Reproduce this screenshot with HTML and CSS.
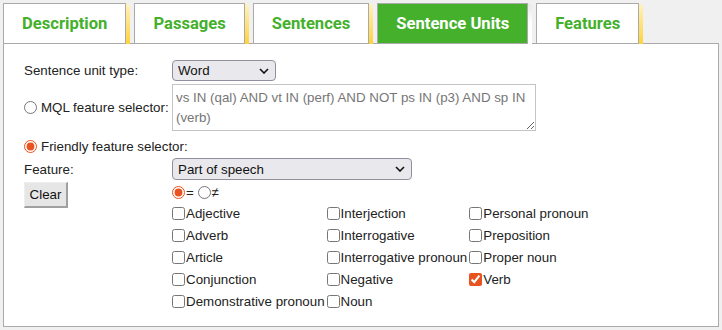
FILE: index.html
```html
<!DOCTYPE html>
<html lang="en">
<head>
    <meta charset="UTF-8">
    <meta name="viewport" content="width=device-width, initial-scale=1.0">
    <title>Sentence Units</title>
    <link rel="stylesheet" href="styles.css">
</head>
<body>
    <div class="tabs">
        <div class="tab"><span class="tab-label">Description</span></div>
        <div class="tab"><span class="tab-label">Passages</span></div>
        <div class="tab"><span class="tab-label">Sentences</span></div>
        <div class="tab active"><span class="tab-label">Sentence Units</span></div>
        <div class="tab"><span class="tab-label">Features</span></div>
    </div>

    <div class="panel">
        <div class="row">
            <div class="cell-label">Sentence unit type:</div>
            <select class="sel-unit"><option>Word</option></select>
        </div>
        <div class="row row-mql">
            <label class="cell-label"><input type="radio" name="selector">MQL feature selector:</label>
            <textarea class="mql" disabled>vs IN (qal) AND vt IN (perf) AND NOT ps IN (p3) AND sp IN (verb)</textarea>
        </div>
        <div class="row row-friendly">
            <label><input type="radio" name="selector" checked>Friendly feature selector:</label>
        </div>
        <div class="row">
            <div class="cell-label">Feature:</div>
            <select class="sel-feature"><option>Part of speech</option></select>
        </div>
        <div class="row row-values">
            <div class="cell-label"><button class="clear">Clear</button></div>
            <div class="values">
                <div class="cmp"><input type="radio" name="cmp" checked>= <input type="radio" name="cmp">≠</div>
                <div class="opts">
                    <label class="opt"><input type="checkbox">Adjective</label>
                    <label class="opt"><input type="checkbox">Adverb</label>
                    <label class="opt"><input type="checkbox">Article</label>
                    <label class="opt"><input type="checkbox">Conjunction</label>
                    <label class="opt"><input type="checkbox">Demonstrative pronoun</label>
                    <label class="opt"><input type="checkbox">Interjection</label>
                    <label class="opt"><input type="checkbox">Interrogative</label>
                    <label class="opt"><input type="checkbox">Interrogative pronoun</label>
                    <label class="opt"><input type="checkbox">Negative</label>
                    <label class="opt"><input type="checkbox">Noun</label>
                    <label class="opt"><input type="checkbox">Personal pronoun</label>
                    <label class="opt"><input type="checkbox">Preposition</label>
                    <label class="opt"><input type="checkbox">Proper noun</label>
                    <label class="opt"><input type="checkbox" checked>Verb</label>
                </div>
            </div>
        </div>
    </div>
</body>
</html>
```

FILE: styles.css
```css
body {
    margin: 0;
    padding: 3px;
    background-color: #f0f0f0;
    font-family: "Liberation Sans", Arial, sans-serif;
    font-size: 13.33px;
    color: #222;
}
input {
    accent-color: #e9531f;
}

/* tabs */
.tabs {
    display: flex;
    gap: 4px;
    position: relative;
    z-index: 1;
    margin-bottom: -1px;
}
.tab {
    padding-right: 4px;
    border-top-right-radius: 5px;
    background: linear-gradient(#fff3c0, #ffd23c);
}
.tab.active {
    background: linear-gradient(#e6e6e6, #ffffff 50%);
}
.tab-label {
    display: block;
    height: 39px;
    line-height: 39px;
    padding: 0 18px;
    background: white;
    border: 1px solid #aaa;
    color: #44b02b;
    font-family: Roboto, "Open Sans", sans-serif;
    font-weight: bold;
    font-size: 16.6px;
}
.tab.active .tab-label {
    background: #44b02b;
    color: white;
}

/* panel */
.panel {
    background: white;
    border: 1px solid #aaa;
    padding: 16px 20px 14px 20px;
}
.row {
    display: flex;
    align-items: center;
}
.cell-label {
    width: 148px;
    flex: none;
    display: flex;
    align-items: center;
}
input[type="radio"] {
    margin: 0 4px 0 0;
}
select {
    -webkit-appearance: none;
    appearance: none;
    font: inherit;
    color: #111;
    height: 21px;
    padding: 0 0 0 5px;
    border: 1px solid #8f8f9d;
    border-radius: 4px;
    background-color: #e9e9ed;
    background-image: url("data:image/svg+xml,%3Csvg xmlns='http://www.w3.org/2000/svg' width='10' height='6' viewBox='0 0 10 6'%3E%3Cpath d='M1 1l4 4 4-4' fill='none' stroke='%23111' stroke-width='1.6'/%3E%3C/svg%3E");
    background-repeat: no-repeat;
    background-position: right 6px center;
}
.sel-unit {
    width: 104px;
}
.sel-feature {
    width: 240px;
    height: 22px;
}
.row-mql {
    margin-top: 3px;
}
.mql {
    width: 364px;
    height: 47px;
    box-sizing: border-box;
    padding: 3px 3px;
    border: 1px solid #c4c4c4;
    background: white;
    color: #767676;
    font: inherit;
    line-height: 20px;
}
.row-friendly {
    height: 27px;
    padding-top: 4px;
    box-sizing: border-box;
}
.row-friendly label {
    display: flex;
    align-items: center;
}
.row-values {
    margin-top: 2px;
    align-items: flex-start;
}
.clear {
    width: 44px;
    height: 26px;
    padding: 0;
    font: inherit;
    color: #111;
    background: #e6e6e6;
    border-style: solid;
    border-width: 1px 2px 2px 1px;
    border-color: #eeeeee #a0a0a0 #a0a0a0 #eeeeee;
}
.cmp {
    height: 20px;
    display: flex;
    align-items: center;
    white-space: pre;
}
.cmp input[type="radio"] {
    margin: 0 1px 0 0;
}
.opts {
    display: grid;
    grid-template-rows: repeat(5, 22px);
    grid-auto-flow: column;
    grid-auto-columns: auto;
    justify-content: start;
    column-gap: 2px;
}
.opt {
    display: flex;
    align-items: center;
    white-space: nowrap;
}
.opt input {
    margin: 0 1px 0 0;
}
```
